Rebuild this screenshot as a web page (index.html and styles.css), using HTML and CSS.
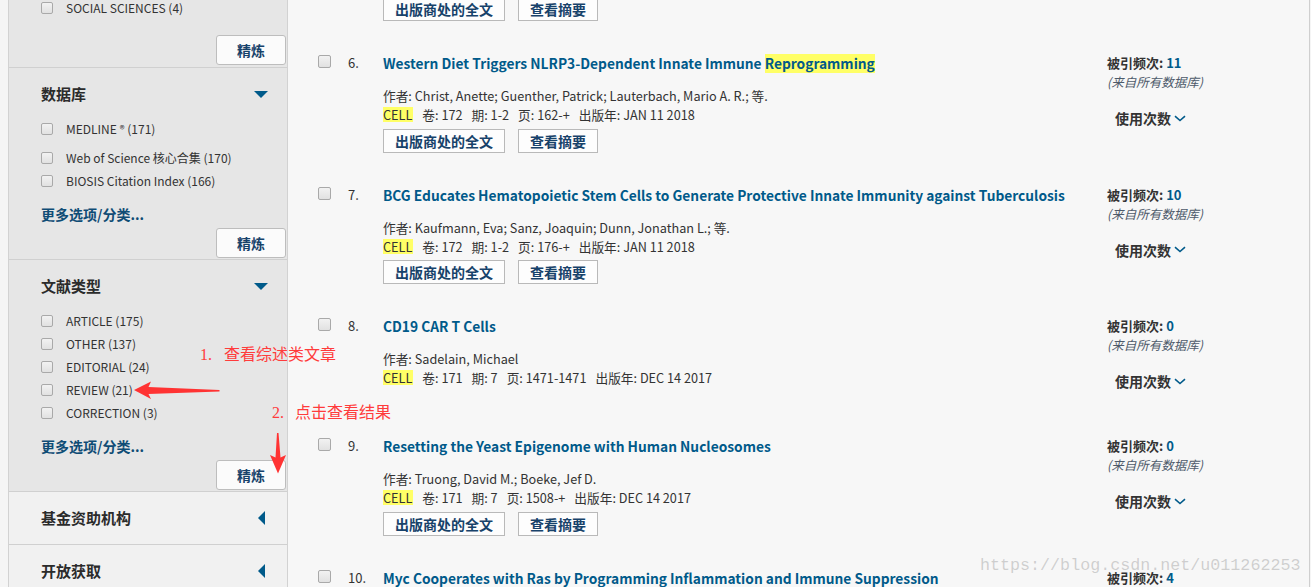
FILE: index.html
```html
<!DOCTYPE html>
<html lang="zh-CN">
<head>
    <meta charset="UTF-8">
    <title>检索结果</title>
    <meta name="viewport" content="width=device-width, initial-scale=1.0">
    <link rel="stylesheet" href="styles.css">
</head>
<body>
    <div class="page">
        <aside class="sidebar">
            <div class="facet facet-partial">
                <div class="facet-list">
                    <div class="facet-item"><span class="cb"></span>SOCIAL SCIENCES (4)</div>
                </div>
                <div class="refine-row refine-row-first"><button class="refine">精炼</button></div>
            </div>

            <div class="facet">
                <div class="facet-head">
                    <span>数据库</span>
                    <span class="facet-icon"><span class="tri-down"></span></span>
                </div>
                <div class="facet-list">
                    <div class="facet-item"><span class="cb"></span>MEDLINE<span class="reg">®</span>&nbsp;(171)</div>
                    <div class="facet-item facet-item-gap"><span class="cb"></span>Web of Science 核心合集 (170)</div>
                    <div class="facet-item"><span class="cb"></span>BIOSIS Citation Index (166)</div>
                </div>
                <div class="more">更多选项/分类...</div>
                <div class="refine-row"><button class="refine">精炼</button></div>
            </div>

            <div class="facet">
                <div class="facet-head">
                    <span>文献类型</span>
                    <span class="facet-icon"><span class="tri-down"></span></span>
                </div>
                <div class="facet-list">
                    <div class="facet-item"><span class="cb"></span>ARTICLE (175)</div>
                    <div class="facet-item"><span class="cb"></span>OTHER (137)</div>
                    <div class="facet-item"><span class="cb"></span>EDITORIAL (24)</div>
                    <div class="facet-item"><span class="cb"></span>REVIEW (21)</div>
                    <div class="facet-item"><span class="cb"></span>CORRECTION (3)</div>
                </div>
                <div class="more">更多选项/分类...</div>
                <div class="refine-row"><button class="refine">精炼</button></div>
            </div>

            <div class="facet facet-closed">
                <div class="facet-head">
                    <span>基金资助机构</span>
                    <span class="facet-icon"><span class="tri-left"></span></span>
                </div>
            </div>

            <div class="facet facet-closed">
                <div class="facet-head">
                    <span>开放获取</span>
                    <span class="facet-icon"><span class="tri-left"></span></span>
                </div>
            </div>
        </aside>

        <main class="results">
            <div class="rec-actions rec-tail">
                <button class="act">出版商处的全文</button>
                <button class="act">查看摘要</button>
            </div>

            <div class="record">
                <div class="rec-check"><span class="cb"></span></div>
                <div class="rec-num">6.</div>
                <div class="rec-body">
                    <div class="rec-title">Western Diet Triggers NLRP3-Dependent Innate Immune <mark class="hl">Reprogramming</mark></div>
                    <div class="rec-authors">作者: Christ, Anette; Guenther, Patrick; Lauterbach, Mario A. R.; 等.</div>
                    <div class="rec-source">
                        <mark class="hl-src">CELL</mark><span>卷: 172</span><span>期: 1-2</span><span>页: 162-+</span><span>出版年: JAN 11 2018</span>
                    </div>
                    <div class="rec-actions">
                        <button class="act">出版商处的全文</button>
                        <button class="act">查看摘要</button>
                    </div>
                </div>
                <div class="rec-cite">
                    <div class="cite-count">被引频次: <span class="num">11</span></div>
                    <div class="cite-src">(来自所有数据库)</div>
                    <div class="usage">使用次数<svg width="12" height="7" viewBox="0 0 12 7"><path d="M1 1.2 L6 5.5 L11 1.2" fill="none" stroke="#005a8a" stroke-width="1.6"/></svg></div>
                </div>
            </div>

            <div class="record">
                <div class="rec-check"><span class="cb"></span></div>
                <div class="rec-num">7.</div>
                <div class="rec-body">
                    <div class="rec-title">BCG Educates Hematopoietic Stem Cells to Generate Protective Innate Immunity against Tuberculosis</div>
                    <div class="rec-authors">作者: Kaufmann, Eva; Sanz, Joaquin; Dunn, Jonathan L.; 等.</div>
                    <div class="rec-source">
                        <mark class="hl-src">CELL</mark><span>卷: 172</span><span>期: 1-2</span><span>页: 176-+</span><span>出版年: JAN 11 2018</span>
                    </div>
                    <div class="rec-actions">
                        <button class="act">出版商处的全文</button>
                        <button class="act">查看摘要</button>
                    </div>
                </div>
                <div class="rec-cite">
                    <div class="cite-count">被引频次: <span class="num">10</span></div>
                    <div class="cite-src">(来自所有数据库)</div>
                    <div class="usage">使用次数<svg width="12" height="7" viewBox="0 0 12 7"><path d="M1 1.2 L6 5.5 L11 1.2" fill="none" stroke="#005a8a" stroke-width="1.6"/></svg></div>
                </div>
            </div>

            <div class="record">
                <div class="rec-check"><span class="cb"></span></div>
                <div class="rec-num">8.</div>
                <div class="rec-body">
                    <div class="rec-title">CD19 CAR T Cells</div>
                    <div class="rec-authors">作者: Sadelain, Michael</div>
                    <div class="rec-source">
                        <mark class="hl-src">CELL</mark><span>卷: 171</span><span>期: 7</span><span>页: 1471-1471</span><span>出版年: DEC 14 2017</span>
                    </div>
                </div>
                <div class="rec-cite">
                    <div class="cite-count">被引频次: <span class="num">0</span></div>
                    <div class="cite-src">(来自所有数据库)</div>
                    <div class="usage">使用次数<svg width="12" height="7" viewBox="0 0 12 7"><path d="M1 1.2 L6 5.5 L11 1.2" fill="none" stroke="#005a8a" stroke-width="1.6"/></svg></div>
                </div>
            </div>

            <div class="record">
                <div class="rec-check"><span class="cb"></span></div>
                <div class="rec-num">9.</div>
                <div class="rec-body">
                    <div class="rec-title">Resetting the Yeast Epigenome with Human Nucleosomes</div>
                    <div class="rec-authors">作者: Truong, David M.; Boeke, Jef D.</div>
                    <div class="rec-source">
                        <mark class="hl-src">CELL</mark><span>卷: 171</span><span>期: 7</span><span>页: 1508-+</span><span>出版年: DEC 14 2017</span>
                    </div>
                    <div class="rec-actions">
                        <button class="act">出版商处的全文</button>
                        <button class="act">查看摘要</button>
                    </div>
                </div>
                <div class="rec-cite">
                    <div class="cite-count">被引频次: <span class="num">0</span></div>
                    <div class="cite-src">(来自所有数据库)</div>
                    <div class="usage">使用次数<svg width="12" height="7" viewBox="0 0 12 7"><path d="M1 1.2 L6 5.5 L11 1.2" fill="none" stroke="#005a8a" stroke-width="1.6"/></svg></div>
                </div>
            </div>

            <div class="record">
                <div class="rec-check"><span class="cb"></span></div>
                <div class="rec-num">10.</div>
                <div class="rec-body">
                    <div class="rec-title">Myc Cooperates with Ras by Programming Inflammation and Immune Suppression</div>
                </div>
                <div class="rec-cite">
                    <div class="cite-count">被引频次: <span class="num">4</span></div>
                </div>
            </div>
        </main>
    </div>

    <!-- screenshot annotations -->
    <div class="note note-1"><span class="note-n">1.</span><span>查看综述类文章</span></div>
    <div class="note note-2"><span class="note-n">2.</span><span>点击查看结果</span></div>
    <svg class="arrows" width="1311" height="587" viewBox="0 0 1311 587">
        <polygon points="134,390 151,381.5 148.5,387 219.5,390 219.5,391.5 148.5,394 151,399" fill="#ff3333"/>
        <polygon points="277,433 278.5,433 280.5,457.5 286,455 278,473.5 270,455 275.5,457.5" fill="#ff3333"/>
    </svg>
    <div class="watermark">https://blog.csdn.net/u011262253</div>
</body>
</html>
```

FILE: styles.css
```css
* {
    box-sizing: border-box;
}

body {
    margin: 0;
    background: #f5f5f5;
    font-family: "Noto Sans CJK SC", sans-serif;
    color: #333;
    height: 587px;
    overflow: hidden;
}

.page {
    display: flex;
    padding-left: 8px;
    padding-right: 1px;
    height: 587px;
    overflow: hidden;
}

/* ---------- sidebar ---------- */

.sidebar {
    width: 280px;
    flex-shrink: 0;
    border-left: 1px solid #d2d2d2;
    border-right: 1px solid #d2d2d2;
    background: #f1f1f1;
}

.facet {
    background: #e6e6e6;
    border-bottom: 1px solid #d0d0d0;
    padding: 14px 1px 1px 32px;
}

.facet-partial {
    padding-top: 0;
    padding-bottom: 2px;
    margin-top: -4px;
}

.facet-closed {
    background: #f1f1f1;
    padding-bottom: 14px;
}

.facet-head {
    display: flex;
    justify-content: space-between;
    align-items: center;
    font-size: 15px;
    font-weight: bold;
    line-height: 24px;
    color: #2b2b2b;
    padding-right: 18px;
}

.facet-icon {
    width: 14px;
    display: flex;
    justify-content: center;
}

.tri-down {
    width: 0;
    height: 0;
    border-left: 7px solid transparent;
    border-right: 7px solid transparent;
    border-top: 7px solid #005a8a;
}

.tri-left {
    width: 0;
    height: 0;
    border-top: 7px solid transparent;
    border-bottom: 7px solid transparent;
    border-right: 7px solid #005a8a;
}

.facet-list {
    margin-top: 11px;
}

.facet-partial .facet-list {
    margin-top: 0;
}

.facet-item {
    display: flex;
    align-items: center;
    height: 23px;
    font-size: 12px;
    color: #333;
}

.facet-item-gap {
    margin-top: 6px;
}

.reg {
    font-size: 10px;
    margin-left: 3px;
}

.cb {
    display: inline-block;
    width: 12px;
    height: 12px;
    border: 1px solid #a9a9a9;
    border-radius: 2px;
    background: linear-gradient(#f2f2f2, #e1e1e1);
    margin-right: 13px;
    flex-shrink: 0;
}

.more {
    margin-top: 12px;
    font-size: 14px;
    font-weight: bold;
    line-height: 20px;
    color: #0f4c75;
}

.refine-row {
    display: flex;
    justify-content: flex-end;
    margin-top: 4px;
}

.refine-row-first {
    margin-top: 16px;
}

.refine {
    width: 70px;
    height: 30px;
    border: 1px solid #bdbdbd;
    border-radius: 3px;
    background: #fbfbfb;
    font-family: inherit;
    font-size: 14px;
    font-weight: bold;
    color: #17426a;
    padding: 0;
}

/* ---------- results ---------- */

.results {
    flex: 1;
    background: #f7f7f7;
    border-right: 1px solid #cfcfcf;
    padding-left: 30px;
}

.record {
    display: flex;
    padding-top: 32px;
}

.rec-check {
    display: flex;
    align-items: flex-start;
    width: 30px;
    padding-top: 2px;
    flex-shrink: 0;
}

.rec-check .cb {
    width: 13px;
    height: 13px;
}

.rec-num {
    width: 35px;
    flex-shrink: 0;
    font-size: 13px;
    line-height: 20px;
}

.rec-body {
    flex: 1;
}

.rec-title {
    font-size: 13.75px;
    font-weight: bold;
    line-height: 20px;
    color: #005a8a;
}

.hl {
    display: inline-block;
    background: #ffff66;
    color: #005a8a;
    line-height: 19px;
}

.rec-authors {
    margin-top: 13px;
    font-size: 12.7px;
    line-height: 19px;
}

.rec-source {
    display: flex;
    align-items: center;
    font-size: 12.7px;
    line-height: 19px;
}

.rec-source span {
    margin-right: 9px;
}

.hl-src {
    display: inline-block;
    background: #ffff66;
    color: #333;
    line-height: 15px;
    padding-right: 1px;
    margin-right: 9px;
}

.rec-actions {
    display: flex;
    gap: 13px;
    margin-top: 4.5px;
}

.rec-actions.rec-tail {
    margin-top: -3px;
    margin-left: 65px;
}

.act {
    height: 24px;
    border: 1px solid #b9b9b9;
    background: #fdfdfd;
    font-family: inherit;
    font-size: 14px;
    font-weight: bold;
    color: #17426a;
    padding: 0 11px;
    line-height: 22px;
}

.rec-cite {
    width: 202px;
    flex-shrink: 0;
    min-height: 88px;
}

.cite-count {
    font-size: 13px;
    font-weight: bold;
    line-height: 20px;
    color: #333;
}

.cite-count .num {
    color: #005a8a;
}

.cite-src {
    font-size: 12.5px;
    font-style: italic;
    line-height: 18px;
    color: #4d5a6a;
}

.usage {
    margin-top: 17px;
    padding-left: 8px;
    font-size: 14px;
    font-weight: bold;
    line-height: 20px;
    display: flex;
    align-items: center;
    gap: 3px;
}

/* ---------- annotations drawn on the screenshot ---------- */

.note {
    position: absolute;
    font-family: "Liberation Serif", "Noto Sans CJK SC", serif;
    font-size: 16px;
    line-height: 20px;
    color: #ff3b3b;
    white-space: nowrap;
}

.note-n {
    display: inline-block;
}

.note-1 {
    left: 200px;
    top: 345px;
}

.note-1 .note-n {
    width: 24px;
}

.note-2 {
    left: 272px;
    top: 403px;
}

.note-2 .note-n {
    width: 23px;
}

.arrows {
    position: absolute;
    left: 0;
    top: 0;
    pointer-events: none;
}

.watermark {
    position: absolute;
    left: 980px;
    top: 556px;
    font-family: "Liberation Mono", monospace;
    font-size: 16.7px;
    line-height: 20px;
    color: rgba(130, 130, 130, 0.35);
    white-space: nowrap;
}
```
